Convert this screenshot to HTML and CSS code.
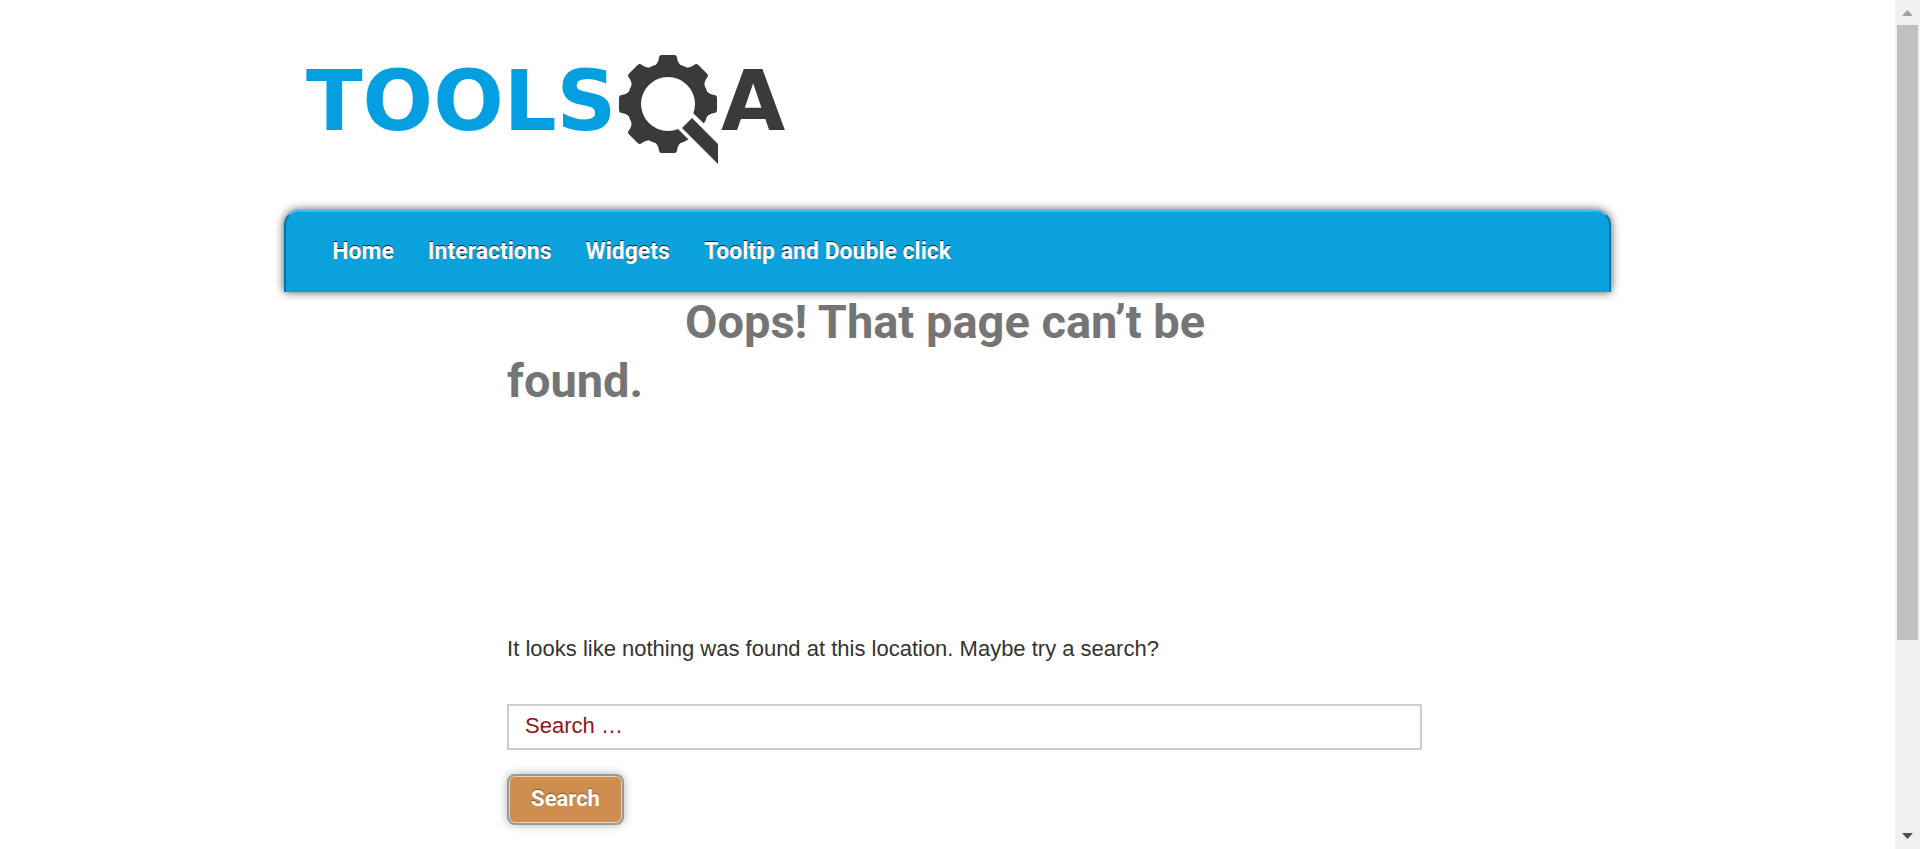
FILE: index.html
```html
<!DOCTYPE html>
<html lang="en">
<head>
<meta charset="utf-8">
<title>Page not found</title>
<link rel="stylesheet" href="styles.css">
</head>
<body>
<div class="page">
  <header class="header">
    <a class="logo" href="#" aria-label="TOOLSQA">
      <svg width="500" height="120" viewBox="300 46 500 120">
        <text class="logo-tools" x="306" y="130">TOOLS</text>
        <g class="logo-gear" transform="translate(668 104)">
          <circle r="41"/>
          <path id="tooth" d="M-15-37Q-10-40-9-46Q-9-49-6-49H6Q9-49 9-46Q10-40 15-37Z"/>
          <use href="#tooth" transform="rotate(45)"/>
          <use href="#tooth" transform="rotate(90)"/>
          <use href="#tooth" transform="rotate(180)"/>
          <use href="#tooth" transform="rotate(225)"/>
          <use href="#tooth" transform="rotate(270)"/>
          <use href="#tooth" transform="rotate(315)"/>
          <circle class="logo-hole" r="27"/>
          <path class="logo-hole" d="M10 25L44 59L60 43L25 9Z"/>
          <path d="M24 14L50 40V60L14 24Z"/>
        </g>
        <text class="logo-a" x="721" y="130">A</text>
      </svg>
    </a>
  </header>
  <nav class="nav">
    <a href="#">Home</a>
    <a href="#">Interactions</a>
    <a href="#">Widgets</a>
    <a href="#">Tooltip and Double click</a>
  </nav>
  <main class="main">
    <h1 class="title">Oops! That page can’t be found.</h1>
    <p class="message">It looks like nothing was found at this location. Maybe try a search?</p>
    <form class="search">
      <input class="field" type="search" placeholder="Search …" aria-label="Search for:">
      <button class="submit" type="submit">Search</button>
    </form>
  </main>
</div>
<div class="scrollbar" aria-hidden="true">
  <svg class="arrow arrow-up" width="11" height="6" viewBox="0 0 11 6"><path d="M0 6L5.500 0L11 6Z"/></svg>
  <div class="track"><div class="thumb"></div></div>
  <svg class="arrow arrow-down" width="11" height="6" viewBox="0 0 11 6"><path d="M0 0H11L5.500 6Z"/></svg>
</div>
</body>
</html>
```
FILE: styles.css
```css
* { box-sizing: border-box; }
body {
  margin: 0;
  display: grid;
  grid-template-columns: 1fr 25px;
  min-height: 100vh;
  background: #fff;
  color: #333;
  font: 22px/36px "Liberation Sans", Arial, sans-serif;
}
.page { width: 70%; margin: 0 auto; padding-top: 46px; }
.header { padding-left: 16px; height: 164px; }
.logo { display: inline-block; }
.logo svg { display: block; }
.logo-tools, .logo-a { font: bold 83px "DejaVu Sans", sans-serif; fill: #049fe0; }
.logo-a, .logo-gear { fill: #3a3a3a; }
.logo-hole { fill: #fff; }
.nav {
  display: flex;
  flex-wrap: wrap;
  gap: 34px;
  padding: 23px 46px;
  background: #0aa1dd;
  border: 2px solid #0773a3;
  border-top-color: #47b4e4;
  border-bottom: 0;
  border-radius: 15px 15px 0 0;
  box-shadow: 0 0 10px rgba(0, 0, 0, .7);
}
.nav a {
  color: #fff;
  font: bold 23px/34px Roboto, sans-serif;
  text-decoration: none;
  text-shadow: 0 -1px 0 #123;
}
.main { width: 69%; margin-left: 16.800%; }
.title {
  margin: 0;
  padding-right: 20%;
  min-height: 339px;
  text-indent: 178px;
  color: #757575;
  font: bold 47px/59px Roboto, sans-serif;
}
.message { margin: 0 0 37px; }
.search { display: flex; flex-direction: column; align-items: flex-start; gap: 24px; }
.field {
  width: 100%;
  height: 46px;
  padding: 0 16px 2px;
  border: 2px solid #ccc;
  background: #fff;
  font: inherit;
  appearance: none;
}
.field::placeholder { color: #8f1420; opacity: 1; }
.submit {
  padding: 9px 22px 10px;
  border: 2px solid #999;
  border-radius: 8px;
  background: #cd8e4f;
  box-shadow: inset 0 0 0 1px #ecd0b2, 0 0 10px rgba(0, 0, 0, .3);
  color: #fff;
  font: bold 22px/28px Roboto, sans-serif;
  text-shadow: 0 -1px 1px rgba(0, 0, 0, .4);
}
.scrollbar {
  display: flex;
  flex-direction: column;
  align-items: center;
  height: 100vh;
  padding: 10px 0;
  gap: 9px;
  background: #f0f0f0;
}
.track { flex: 1; width: 21px; }
.thumb { height: 77%; background: #c0c0c0; }
.arrow-up { fill: #a0a0a0; }
.arrow-down { fill: #505050; }
```
